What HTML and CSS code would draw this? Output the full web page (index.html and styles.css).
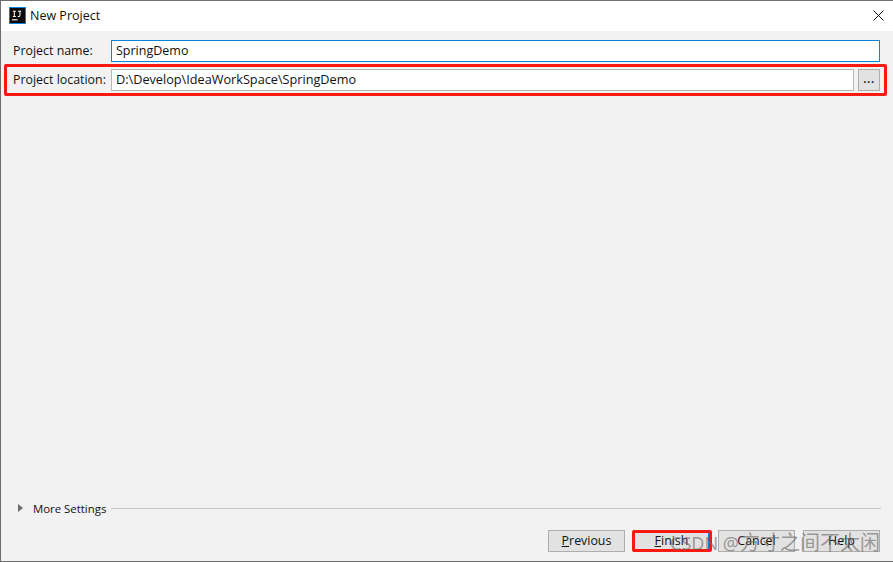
FILE: index.html
```html
<!DOCTYPE html>
<html lang="en">
<head>
<meta charset="utf-8">
<title>New Project</title>
<link rel="stylesheet" href="styles.css">
</head>
<body>
<div class="window">
  <header class="titlebar">
    <svg class="app-icon" width="15" height="15" viewBox="0 0 16 16">
      <rect width="16" height="16" fill="#0a0a0a"/>
      <rect x="2" y="12" width="6" height="1.2" fill="#fff"/>
      <path d="M3 3.500h3.200M4.600 3.500v5.500M3 9h3.200M8.500 3.500h3.400M10.600 3.500v4.600q0 1-1 1h-1.300" stroke="#fff" stroke-width="1.100" fill="none"/>
    </svg>
    <span class="title">New Project</span>
    <svg class="close" width="11" height="11" viewBox="0 0 11 11">
      <path d="M.5.5l10 10M10.500.5l-10 10" stroke="#111" stroke-width="1" fill="none"/>
    </svg>
  </header>
  <main class="content">
    <div class="row row-name">
      <label class="label">Project name:</label>
      <div class="field field-focus">SpringDemo</div>
    </div>
    <div class="row row-location">
      <label class="label">Project location:</label>
      <div class="field field-path">D:\Develop\IdeaWorkSpace\SpringDemo</div>
      <div class="browse">...</div>
    </div>
    <div class="spacer"></div>
    <div class="more">
      <span class="triangle"></span>
      <span class="more-text">More Settings</span>
      <span class="rule"></span>
    </div>
    <div class="buttons">
      <button class="btn"><u>P</u>revious</button>
      <button class="btn btn-finish"><u>F</u>inish</button>
      <button class="btn">Cancel</button>
      <button class="btn">Help</button>
    </div>
  </main>
  <div class="mark mark-location"></div>
  <div class="mark mark-finish"></div>
  <div class="watermark">CSDN @<span class="watermark-cjk">方寸之间不太闲</span></div>
</div>
</body>
</html>
```
FILE: styles.css
```css
* { box-sizing: border-box; }
html, body { margin: 0; padding: 0; }
body { width: 893px; height: 562px; overflow: hidden; font-family: "Open Sans", "Noto Sans", sans-serif; font-size: 12.500px; color: #111; }
.window { position: relative; width: 893px; height: 562px; display: flex; flex-direction: column; border: 1px solid #6e6e6e; border-right: 0; background: #f2f2f2; }
.titlebar { height: 30px; flex: none; background: #fff; display: flex; align-items: center; padding: 0 9px 2px 9px; gap: 5px; }
.app-icon { flex: none; outline: 1px solid #0a84e0; }
.title { font-size: 12.500px; flex: 1; }
.content { flex: 1; display: flex; flex-direction: column; padding: 9px 13px 9px 12px; }
.row { display: flex; align-items: center; }
.row-name { height: 22px; }
.row-location { height: 22px; margin-top: 7px; }
.label { width: 98px; flex: none; font-size: 12.400px; white-space: nowrap; padding-bottom: 1px; }
.field { flex: 1; height: 100%; background: #fff; border: 1px solid #b8b8b8; padding: 0 4px; font-size: 12.500px; line-height: 19px; }
.field-focus { border-color: #0a84d8; }
.field-path { font-size: 12.700px; }
.browse { flex: none; width: 22px; height: 100%; margin-left: 4px; background: #e2e2e2; border: 1px solid #adadad; text-align: center; font-size: 12px; font-weight: 600; letter-spacing: .5px; line-height: 18px; }
.spacer { flex: 1; }
.more { display: flex; align-items: center; height: 14px; margin-left: 5px; margin-right: -1px; }
.triangle { width: 0; height: 0; border-left: 5px solid #6e6e6e; border-top: 4.500px solid transparent; border-bottom: 4.500px solid transparent; }
.more-text { margin-left: 10px; font-size: 11.400px; }
.rule { flex: 1; height: 1px; background: #c8c8c8; margin-left: 5px; }
.buttons { display: flex; justify-content: flex-end; gap: 8px; margin-top: 15px; }
.btn { width: 77px; height: 22px; padding: 0 0 2px; border: 1px solid #adadad; background: #e2e2e2; font: inherit; font-size: 12.400px; color: #111; }
.btn-finish { border-color: #0a84d8; box-shadow: inset -1px 0 0 #0a84d8; }
.mark { position: absolute; border: 3px solid #fa1a10; border-radius: 2px; pointer-events: none; }
.mark-location { left: 3px; top: 63px; width: 883px; height: 32px; }
.mark-finish { left: 631px; top: 529px; width: 80px; height: 22px; }
.watermark { position: absolute; left: 669px; top: 526px; font-family: "Noto Sans", "Noto Sans CJK SC", sans-serif; font-size: 18px; white-space: nowrap; color: rgba(100, 100, 100, .6); pointer-events: none; }
.watermark-cjk { font-size: 20px; margin-left: 1px; }
```
